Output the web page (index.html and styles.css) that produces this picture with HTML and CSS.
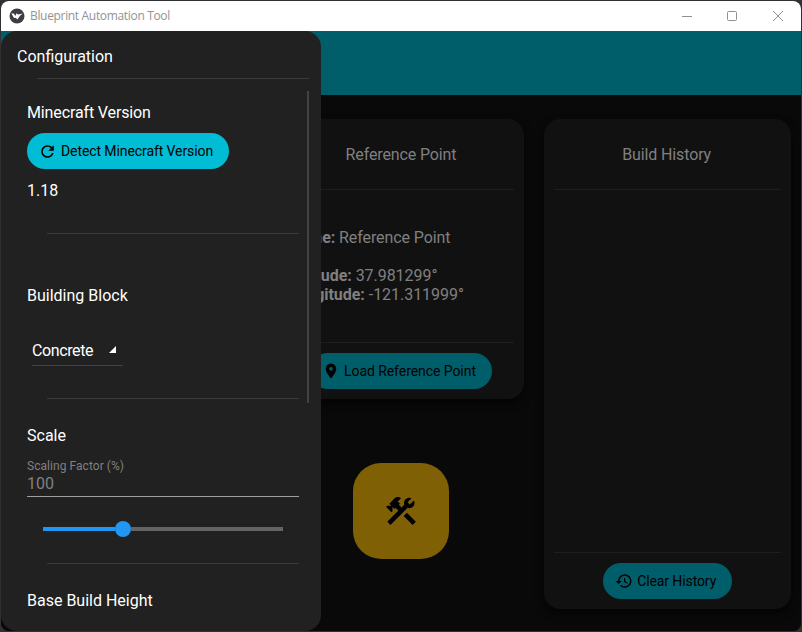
FILE: index.html
```html
<!DOCTYPE html>
<html lang="en">
<head>
<meta charset="utf-8">
<title>Blueprint Automation Tool</title>
<link rel="stylesheet" href="styles.css">
</head>
<body>
<div class="window">
  <header class="titlebar">
    <svg class="app-icon" viewBox="0 0 16 16"><circle cx="8" cy="8" r="7.5" fill="#3c3f41"/><path d="M2.4 5.4 4.8 5.6 6.3 8 7.6 5.2 9 6.4l4.8-.9-2.3 1.8L9.8 9.6 8.3 11.4 6.7 9.8 5 10z" fill="#fff"/></svg>
    <span class="app-title">Blueprint Automation Tool</span>
    <div class="controls">
      <svg viewBox="0 0 12 12"><path d="M2 6.5h10"/></svg>
      <svg viewBox="0 0 12 12"><rect x="1.5" y="1.5" width="9" height="9" rx="1"/></svg>
      <svg viewBox="0 0 12 12"><path d="M1 1l10 10M11 1L1 11"/></svg>
    </div>
  </header>
  <div class="app">
    <div class="toolbar"></div>
    <main class="content">
      <section class="card"></section>
      <div class="column">
        <section class="card reference">
          <h2>Reference Point</h2>
          <div class="details">
            <p><b>Name:</b> Reference Point</p>
            <p class="gap"><b>Latitude:</b> 37.981299°</p>
            <p><b>Longitude:</b> -121.311999°</p>
          </div>
          <div class="actions">
            <button class="pill load"><svg viewBox="0 0 24 24"><path d="M12,11.5A2.5,2.5 0 0,1 9.5,9A2.5,2.5 0 0,1 12,6.5A2.5,2.5 0 0,1 14.5,9A2.5,2.5 0 0,1 12,11.5M12,2A7,7 0 0,0 5,9C5,14.25 12,22 12,22C12,22 19,14.25 19,9A7,7 0 0,0 12,2Z"/></svg><span>Load Reference Point</span></button>
          </div>
        </section>
        <button class="build" aria-label="Build"><svg viewBox="0 0 24 24"><path d="M13.78 15.3L19.78 21.3L21.89 19.14L15.89 13.14L13.78 15.3M17.5 10.1C17.11 10.1 16.69 10.05 16.36 9.91L4.97 21.25L2.86 19.14L10.27 11.74L8.5 9.96L7.78 10.66L6.33 9.25V12.11L5.63 12.81L2.11 9.25L2.81 8.55H5.62L4.22 7.14L7.78 3.58C8.95 2.41 10.83 2.41 12 3.58L9.89 5.74L11.3 7.14L10.59 7.85L12.38 9.63L14.2 7.75C14.06 7.42 14 7 14 6.63C14 4.66 15.56 3.11 17.5 3.11C18.09 3.11 18.61 3.25 19.08 3.53L16.41 6.2L17.91 7.7L20.58 5.03C20.86 5.5 21 6 21 6.63C21 8.55 19.45 10.1 17.5 10.1Z"/></svg></button>
      </div>
      <section class="card history">
        <h2>Build History</h2>
        <div class="list"></div>
        <div class="actions">
          <button class="pill clear"><svg viewBox="0 0 24 24"><path d="M13.5,8H12V13L16.28,15.54L17,14.33L13.5,12.25V8M13,3A9,9 0 0,0 4,12H1L4.96,16.03L9,12H6A7,7 0 0,1 13,5A7,7 0 0,1 20,12A7,7 0 0,1 13,19C11.07,19 9.32,18.21 8.06,16.94L6.64,18.36C8.27,20 10.5,21 13,21A9,9 0 0,0 22,12A9,9 0 0,0 13,3"/></svg><span>Clear History</span></button>
        </div>
      </section>
    </main>
    <aside class="drawer">
      <h1>Configuration</h1>
      <div class="settings">
        <section class="group version">
          <h3>Minecraft Version</h3>
          <button class="pill bright"><svg viewBox="0 0 24 24"><path d="M17.65,6.35C16.2,4.9 14.21,4 12,4A8,8 0 0,0 4,12A8,8 0 0,0 12,20C15.73,20 18.84,17.45 19.73,14H17.65C16.83,16.33 14.61,18 12,18A6,6 0 0,1 6,12A6,6 0 0,1 12,6C13.66,6 15.14,6.69 16.22,7.78L13,11H20V4L17.65,6.35Z"/></svg><span>Detect Minecraft Version</span></button>
          <p>1.18</p>
        </section>
        <section class="group block">
          <h3>Building Block</h3>
          <div class="select"><span>Concrete</span><svg viewBox="0 0 7 7"><path d="M7 0v7H0z"/></svg></div>
        </section>
        <section class="group scale">
          <h3>Scale</h3>
          <div class="field"><label>Scaling Factor (%)</label><span>100</span></div>
          <div class="slider"><i class="fill"></i><i class="thumb"></i><i class="rest"></i></div>
        </section>
        <section class="group">
          <h3>Base Build Height</h3>
        </section>
      </div>
      <div class="scrollbar"></div>
    </aside>
  </div>
</div>
</body>
</html>
```
FILE: styles.css
```css
* { box-sizing: border-box; margin: 0; padding: 0; }

body {
  width: 802px;
  height: 632px;
  padding: 1px;
  overflow: hidden;
  background: #303035;
  font: 16px/19px Roboto, "Liberation Sans", sans-serif;
}

h1, h2, h3 { font-size: 16px; font-weight: 400; line-height: 19px; }
button { border: 0; font: inherit; }
svg { display: block; }

.window {
  width: 800px;
  height: 630px;
  border-radius: 8px;
  overflow: hidden;
  background: #090909;
}

.titlebar {
  height: 30px;
  padding-left: 8px;
  display: flex;
  align-items: center;
  background: #fff;
}
.app-icon { width: 16px; height: 16px; margin-top: -1px; }
.app-title {
  margin-left: 5px;
  color: #939393;
  font: 12px/16px "Open Sans", sans-serif;
  letter-spacing: -0.33px;
}
.controls { display: flex; gap: 34px; margin-left: auto; margin-right: 17px; }
.controls svg { width: 12px; height: 12px; fill: none; stroke: #8f8f8f; stroke-width: 1; }

.app { position: relative; height: 600px; background: #090909; }
.toolbar { height: 64px; background: #005e6a; }

.content {
  height: 536px;
  padding: 24px 10px 22px;
  display: grid;
  grid-template-columns: repeat(3, 1fr);
  gap: 20px;
}
.column { display: flex; flex-direction: column; align-items: center; }
.card {
  width: 100%;
  padding: 0 10px 10px;
  display: flex;
  flex-direction: column;
  border-radius: 16px;
  background: #111;
  color: #808080;
  box-shadow: 0 4px 9px rgba(0, 0, 0, .65);
}
.card h2 {
  height: 71px;
  padding-top: 26px;
  text-align: center;
  letter-spacing: -0.13px;
  border-bottom: 1px solid #1e1e1e;
}
.history h2 { padding-right: 2px; }
.reference { height: 280px; }
.details { height: 152px; padding: 38px 0 0 1px; white-space: nowrap; }
.details p { letter-spacing: -0.04px; }
.details p:first-child { letter-spacing: -0.08px; }
.details .gap { margin-top: 19px; }
.actions {
  padding-top: 10px;
  display: flex;
  justify-content: center;
  border-top: 1px solid #1e1e1e;
}
.list { flex: 1; }

.pill {
  height: 36px;
  padding: 0 16px 0 12px;
  display: flex;
  align-items: center;
  gap: 4px;
  border-radius: 18px;
  background: #005e6a;
  color: #000;
  font-size: 14px;
  letter-spacing: -0.06px;
  white-space: nowrap;
}
.pill svg { width: 18px; height: 18px; flex: none; }
.load { width: 182px; }
.clear { width: 129px; letter-spacing: -0.1px; }

.build {
  width: 96px;
  height: 96px;
  margin-top: 64px;
  display: grid;
  place-items: center;
  border-radius: 28px;
  background: #806004;
}
.build svg { width: 36px; height: 36px; }

.drawer {
  position: absolute;
  left: 0;
  top: 0;
  width: 320px;
  height: 600px;
  border-radius: 16px;
  overflow: hidden;
  background: #212121;
  color: #fff;
}
.drawer h1 {
  height: 47px;
  padding: 16px 0 0 16px;
}
.drawer h1::after {
  content: "";
  display: block;
  height: 1px;
  margin: 12px 12px 0 20px;
  background: #3b3b3b;
}
.settings { padding: 25px 22px 0 26px; }
.group::after {
  content: "";
  display: block;
  height: 1px;
  margin: 0 0 0 20px;
  background: #3b3b3b;
}
.group:last-child::after { display: none; }
.bright {
  width: 202px;
  margin: 11px 0 12px;
  padding-left: 11px;
  gap: 3px;
  background: #00bcd4;
  letter-spacing: -0.09px;
}
.bright svg { width: 19px; height: 19px; margin-right: 1px; }
.version h3 { letter-spacing: -0.13px; }
.version::after { margin-top: 33px; }
.block { margin-top: 52px; }
.select {
  width: 91px;
  height: 30px;
  margin: 31px 0 0 5px;
  padding: 0 7px 1px 0;
  display: flex;
  align-items: center;
  justify-content: space-between;
  border-bottom: 1px solid #424242;
}
.select span { letter-spacing: -0.38px; }
.select svg { width: 7px; height: 7px; margin-top: -1px; fill: #fff; }
.block::after { margin-top: 32px; }
.scale { margin-top: 27px; }
.field {
  height: 40px;
  margin-top: 12px;
  display: flex;
  flex-direction: column;
  border-bottom: 1px solid #a0a0a0;
  color: #808080;
}
.field label { padding-top: 2px; font-size: 12px; line-height: 15px; letter-spacing: 0.05px; }
.slider { height: 16px; margin: 24px 16px 26px; display: flex; align-items: center; }
.fill { width: 72px; height: 4px; background: #2196f3; }
.thumb { width: 16px; height: 16px; border-radius: 50%; background: #2196f3; }
.rest { flex: 1; height: 4px; background: #646464; }
.group:last-child { margin-top: 27px; }

.scrollbar {
  position: absolute;
  left: 306px;
  top: 60px;
  width: 2px;
  height: 312px;
  background: #424242;
}
```
